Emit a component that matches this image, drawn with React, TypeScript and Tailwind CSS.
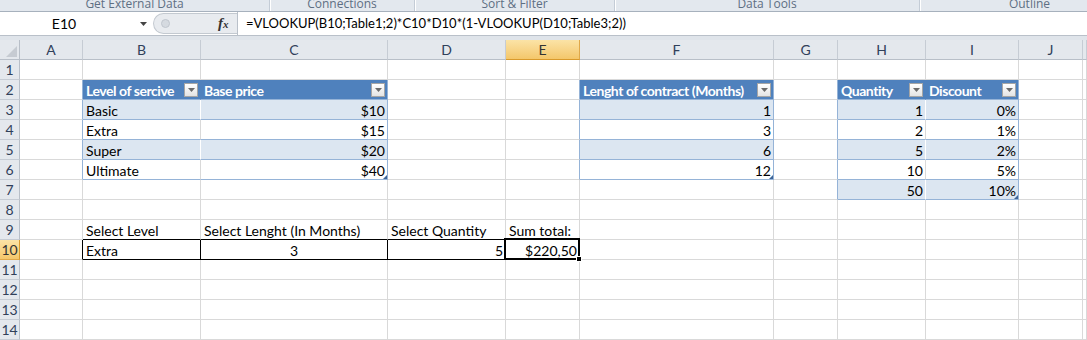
import React from 'react';
import clsx from 'clsx';

type Align = 'left' | 'right' | 'center';
interface CellData {
  text: string;
  align?: Align;
  dd?: boolean;
}

const letters = ['A', 'B', 'C', 'D', 'E', 'F', 'G', 'H', 'I', 'J', ''];

const cells: Record<string, CellData> = {
  B2: { text: 'Level of sercive', dd: true },
  C2: { text: 'Base price', dd: true },
  B3: { text: 'Basic' },
  C3: { text: '$10', align: 'right' },
  B4: { text: 'Extra' },
  C4: { text: '$15', align: 'right' },
  B5: { text: 'Super' },
  C5: { text: '$20', align: 'right' },
  B6: { text: 'Ultimate' },
  C6: { text: '$40', align: 'right' },
  F2: { text: 'Lenght of contract (Months)', dd: true },
  F3: { text: '1', align: 'right' },
  F4: { text: '3', align: 'right' },
  F5: { text: '6', align: 'right' },
  F6: { text: '12', align: 'right' },
  H2: { text: 'Quantity', dd: true },
  I2: { text: 'Discount', dd: true },
  H3: { text: '1', align: 'right' },
  I3: { text: '0%', align: 'right' },
  H4: { text: '2', align: 'right' },
  I4: { text: '1%', align: 'right' },
  H5: { text: '5', align: 'right' },
  I5: { text: '2%', align: 'right' },
  H6: { text: '10', align: 'right' },
  I6: { text: '5%', align: 'right' },
  H7: { text: '50', align: 'right' },
  I7: { text: '10%', align: 'right' },
  B9: { text: 'Select Level' },
  C9: { text: 'Select Lenght (In Months)' },
  D9: { text: 'Select Quantity' },
  E9: { text: 'Sum total:' },
  B10: { text: 'Extra' },
  C10: { text: '3', align: 'center' },
  D10: { text: '5', align: 'right' },
  E10: { text: '$220,50', align: 'right' },
};

// excel tables: top/bottom row, first/last column (0 = A)
const tables = [
  { top: 2, bottom: 6, left: 1, right: 2 },
  { top: 2, bottom: 6, left: 5, right: 5 },
  { top: 2, bottom: 7, left: 7, right: 8 },
];

const tableAt = (r: number, c: number) => {
  const t = tables.find(t => r >= t.top && r <= t.bottom && c >= t.left && c <= t.right);
  if (!t) return null;
  return {
    header: r === t.top,
    band: r !== t.top && (r - t.top) % 2 === 1,
    first: c === t.left,
    last: c === t.right,
    corner: r === t.bottom && c === t.right,
  };
};

const isInput = (r: number, c: number) => r === 10 && c >= 1 && c <= 4;

const rightBorder = {
  grid: 'border-r-[#d9d9d9]',
  blue: 'border-r-[#95b3d7]',
  head: 'border-r-[#4f81bd]',
  white: 'border-r-white',
  black: 'border-r-black',
};
const bottomBorder = {
  grid: 'border-b-[#d9d9d9]',
  blue: 'border-b-[#95b3d7]',
  black: 'border-b-black',
};

function rightOf(r: number, c: number): keyof typeof rightBorder {
  if (isInput(r, c) || isInput(r, c + 1)) return 'black';
  const t = tableAt(r, c);
  const n = tableAt(r, c + 1);
  if (t && t.last) return 'blue';
  if (n && n.first) return 'blue';
  if (t) return t.header ? 'head' : t.band ? 'white' : 'grid';
  return 'grid';
}

function bottomOf(r: number, c: number): keyof typeof bottomBorder {
  if (isInput(r, c) || isInput(r + 1, c)) return 'black';
  if (tableAt(r, c)) return 'blue';
  return 'grid';
}

const DropDown = () => (
  <div className="absolute right-[2px] top-[3px] w-[14px] h-[14px] border border-[#a6a6a6] bg-gradient-to-b from-white to-[#e4e4e4] flex items-center justify-center">
    <svg width="7" height="4" viewBox="0 0 7 4">
      <path d="M0 0h7L3.5 4z" fill="#6b6b6b" />
    </svg>
  </div>
);

const Cell: React.FC<{ r: number; c: number }> = ({ r, c }) => {
  const key = letters[c] + r;
  const d = cells[key];
  const t = tableAt(r, c);
  const selected = key === 'E10';
  return (
    <div
      className={clsx(
        'relative h-[20px] border-r border-b flex items-end',
        rightBorder[rightOf(r, c)],
        bottomBorder[bottomOf(r, c)],
        t?.header ? 'bg-[#4f81bd] text-white font-bold tracking-[-0.45px]' : t?.band ? 'bg-[#dce6f1]' : 'bg-white',
      )}
    >
      {d && (
        <span
          className={clsx(
            'w-full whitespace-nowrap overflow-hidden leading-[17px] px-[3px]',
            d.align === 'right' && 'text-right pr-[2px]',
            d.align === 'center' && 'text-center',
          )}
        >
          {d.text}
        </span>
      )}
      {d?.dd && <DropDown />}
      {t?.corner && (
        <svg className="absolute right-0 bottom-0" width="4" height="4" viewBox="0 0 4 4">
          <path d="M4 0v4H0z" fill="#3d6598" />
        </svg>
      )}
      {selected && (
        <div className="absolute -left-[2px] -top-[2px] -right-[1px] -bottom-[1px] border-2 border-black z-10">
          <div className="absolute -right-[4px] -bottom-[4px] w-[6px] h-[6px] bg-black border border-white" />
        </div>
      )}
    </div>
  );
};

const groups = [
  { label: 'Get External Data', w: 'w-[270px]' },
  { label: 'Connections', w: 'w-[145px]' },
  { label: 'Sort & Filter', w: 'w-[200px]' },
  { label: 'Data Tools', w: 'w-[305px]' },
  { label: 'Outline', w: 'w-[220px]' },
];

export default function App() {
  const rows = Array.from({ length: 14 }, (_, i) => i + 1);
  return (
    <div className="w-[1087px] h-[340px] overflow-hidden bg-white font-['Lato','Open_Sans',sans-serif] text-[14px] text-black">
      {/* ribbon group captions, partly scrolled away at the top */}
      <div className="h-[12px] flex bg-[#e3e8ee] border-b border-[#a7b1bd] overflow-hidden">
        {groups.map(g => (
          <div
            key={g.label}
            className={clsx(
              g.w,
              'shrink-0 border-r border-r-[#c4ccd6] shadow-[1px_0_0_white] text-center text-[12px] leading-[12px] -mt-[2px] text-[#5e6f83] font-["Open_Sans",sans-serif]',
            )}
          >
            {g.label}
          </div>
        ))}
      </div>

      {/* formula bar */}
      <div className="h-[24px] flex border-b border-[#b9c0c9] bg-white">
        <div className="w-[153px] shrink-0 relative flex items-center">
          <span className="w-[128px] text-center leading-[22px]">E10</span>
          <svg className="absolute left-[140px] top-[10px]" width="7" height="4" viewBox="0 0 7 4">
            <path d="M0 0h7L3.5 4z" fill="#444" />
          </svg>
        </div>
        <div className="w-[84px] shrink-0 my-[1px] rounded-l-full bg-[#e8ebef] border border-r-0 border-[#c3c9d0] flex items-center">
          <div className="ml-[7px] w-[9px] h-[9px] rounded-full bg-[#d5dae0] border border-[#c0c6ce]" />
          <span className="ml-[48px] font-['Liberation_Serif',serif] italic font-bold text-[15px] leading-[18px] text-[#333]">
            f<span className="text-[11px]">x</span>
          </span>
        </div>
        <div className="flex-1 border-l border-[#b9c0c9] pl-[8px] leading-[22px] text-[13px] whitespace-nowrap">
          =VLOOKUP(B10;Table1;2)*C10*D10*(1-VLOOKUP(D10;Table3;2))
        </div>
      </div>
      <div className="h-[4px] bg-[#dfe4ea]" />

      {/* sheet */}
      <div className="grid grid-cols-[20px_63px_118px_187px_118px_74px_194px_64px_88px_93px_64px_1fr] auto-rows-[20px]">
        <div className="relative h-[20px] bg-[#e4e8ed] border-r border-b border-[#b8bfc8]">
          <svg className="absolute right-[2px] bottom-[2px]" width="11" height="11" viewBox="0 0 11 11">
            <path d="M11 0v11H0z" fill="#c6cbd2" />
          </svg>
        </div>
        {letters.map((l, c) => (
          <div
            key={'h' + c}
            className={clsx(
              'h-[20px] border-r border-b flex items-center justify-center leading-[20px]',
              l === 'E'
                ? 'bg-gradient-to-b from-[#fbe3a6] to-[#f4c76a] border-r-[#e0a849] border-b-[#d99a2c] text-[#333]'
                : 'bg-[#e4e8ed] border-r-[#c6ccd4] border-b-[#b8bfc8] text-[#30405a]',
            )}
          >
            {l}
          </div>
        ))}
        {rows.map(r => (
          <React.Fragment key={r}>
            <div
              className={clsx(
                'h-[20px] border-r border-b flex items-center justify-center leading-[20px]',
                r === 10
                  ? 'bg-gradient-to-b from-[#fbe3a6] to-[#f4c76a] border-r-[#d99a2c] border-b-[#e0a849] text-[#333]'
                  : 'bg-[#e4e8ed] border-r-[#b8bfc8] border-b-[#c6ccd4] text-[#30405a]',
              )}
            >
              {r}
            </div>
            {letters.map((_, c) => (
              <Cell key={c} r={r} c={c} />
            ))}
          </React.Fragment>
        ))}
      </div>
    </div>
  );
}
